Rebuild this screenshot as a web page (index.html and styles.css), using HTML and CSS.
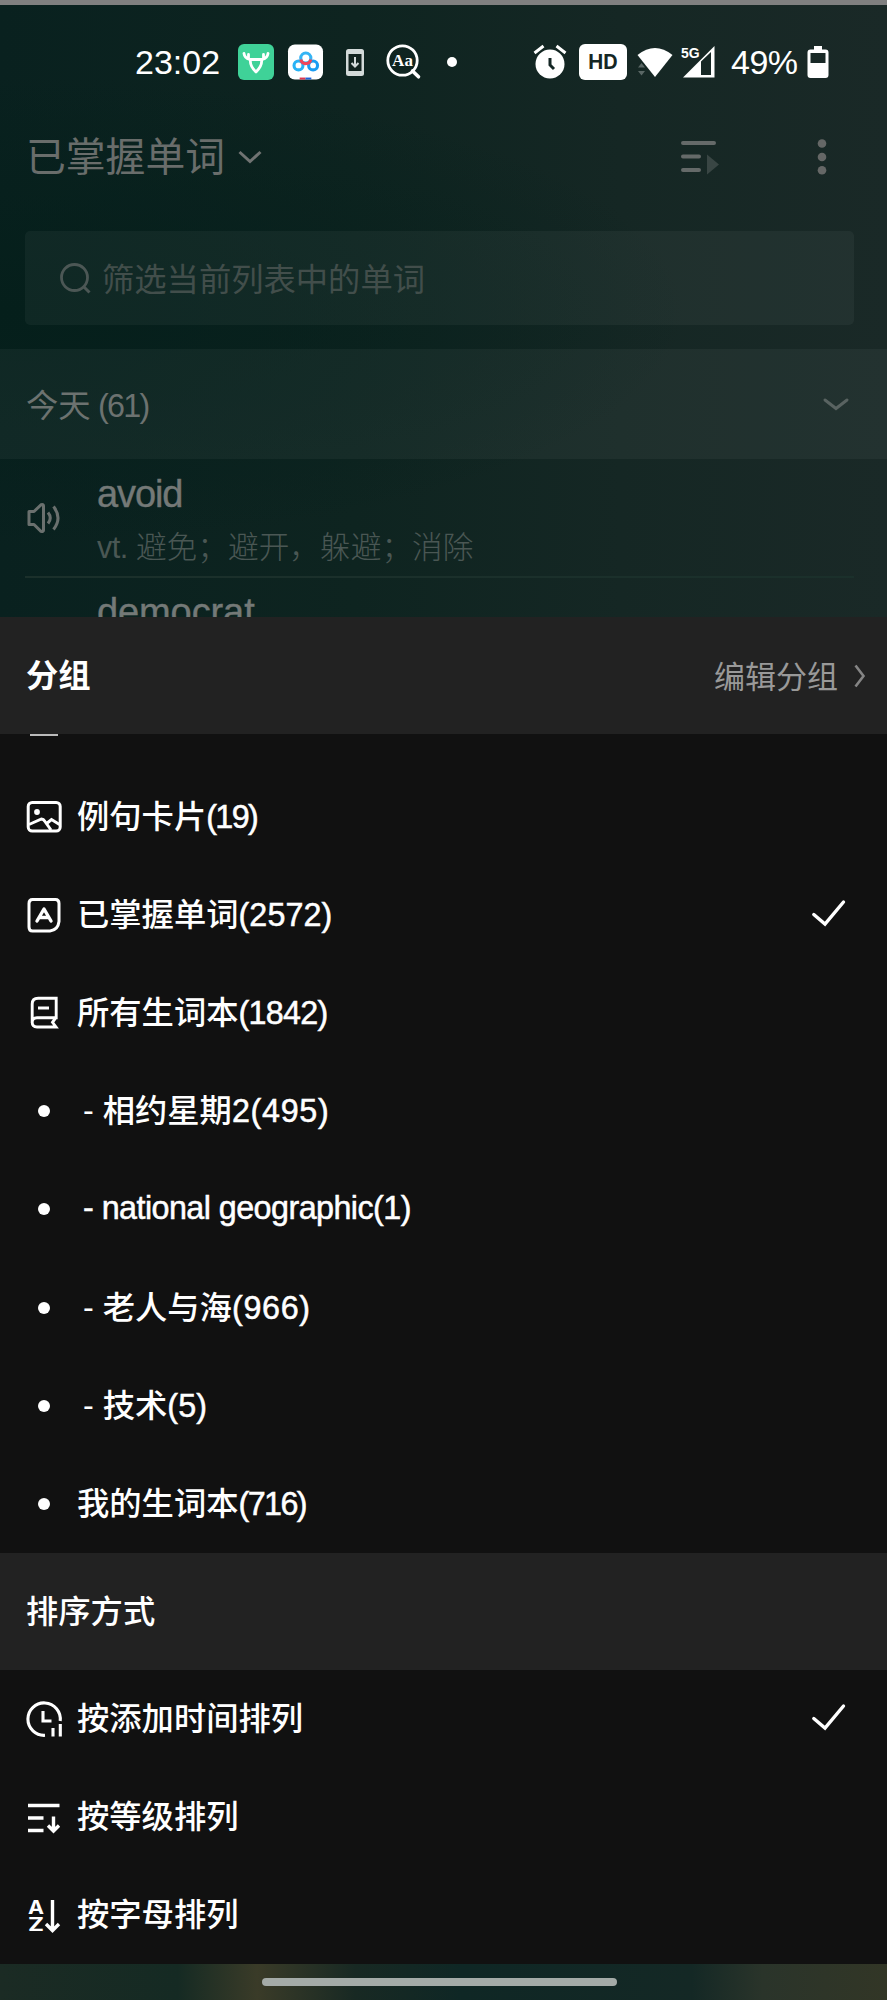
FILE: index.html
```html
<!DOCTYPE html>
<html lang="zh-CN">
<head>
    <meta charset="UTF-8">
    <meta name="viewport" content="width=device-width, initial-scale=1.0">
    <title>已掌握单词</title>
    <link rel="stylesheet" href="styles.css">
</head>
<body>
    <!-- Word list behind the sheet -->
    <div class="page">
        <!-- Status bar -->
        <div class="status-bar">
            <div class="status-left">
                <span class="time">23:02</span>
                <svg class="app-icon" width="36" height="36" viewBox="0 0 36 36">
                    <rect width="36" height="36" rx="6" fill="#3fd298"/>
                    <g fill="none" stroke="#fff" stroke-width="2.8" stroke-linecap="round" stroke-linejoin="round">
                        <path d="M6 9.500c.5 3.500 2 5 5.500 6h13c3.500-1 5-2.500 5.500-6M10.500 10.500v4.500M25.500 10.500v4.500"/>
                        <path d="M12.500 16c-.8 4.500 1.500 8 5.500 12 4-4 6.300-7.500 5.500-12"/>
                    </g>
                </svg>
                <svg class="cloud-icon" width="35" height="36" viewBox="0 0 36 36">
                    <rect width="36" height="36" rx="7" fill="#fff"/>
                    <g fill="none" stroke-width="3.200">
                        <circle cx="10.800" cy="21.500" r="4.600" stroke="#28b2f5"/>
                        <circle cx="25.800" cy="21.500" r="4.600" stroke="#1a9df2"/>
                        <circle cx="18.300" cy="14" r="5.200" stroke="#35b4f4"/>
                        <path d="M13.200 15.500a5.200 5.200 0 0 0 10.200 0" stroke="#f0455a"/>
                    </g>
                    <path d="M12 34h6v2h-6z" fill="#e0354f"/>
                    <path d="M18 34h6v2h-6z" fill="#1c62d8"/>
                </svg>
                <svg class="phone-icon" width="18" height="27" viewBox="0 0 18 27">
                    <rect width="18" height="27" rx="2.500" fill="#d3dad9"/>
                    <path d="M2.500 5h13v17h-13z" fill="#12231f"/>
                    <path d="M9 8v9M5.500 14 9 17.500l3.500-3.500" fill="none" stroke="#d3dad9" stroke-width="2"/>
                </svg>
                <svg class="dict-icon" width="36" height="36" viewBox="0 0 36 36">
                    <circle cx="16.500" cy="16.500" r="14.700" fill="none" stroke="#fff" stroke-width="2.800"/>
                    <path d="m26.500 27 6 5.800" stroke="#fff" stroke-width="3.600" stroke-linecap="round"/>
                    <text x="16.500" y="21.500" text-anchor="middle" font-family="Liberation Serif" font-weight="bold" font-size="17" fill="#fff">Aa</text>
                </svg>
                <span class="dot"></span>
            </div>
            <div class="status-right">
                <svg width="34" height="34" viewBox="0 0 34 34">
                    <circle cx="17" cy="19" r="14.500" fill="#fff"/>
                    <path d="m1.500 8 9-7M32.500 8l-9-7" stroke="#fff" stroke-width="3"/>
                    <path d="M17 13v7l4 4" fill="none" stroke="#142624" stroke-width="3"/>
                </svg>
                <span class="hd">HD</span>
                <svg class="wifi" width="36" height="31" viewBox="0 0 36 31">
                    <path d="M.5 8Q18-6 35.500 8L18 30z" fill="#fff"/>
                    <path d="m4.500 16 3.500 4.500H1zM4.500 28.500 8 24H1z" fill="#5a6765"/>
                </svg>
                <svg class="signal" width="34" height="33" viewBox="0 0 34 33">
                    <path d="M2 31.500 33.500 0v31.500zM20 15.500V29h10V6z" fill="#fff" fill-rule="evenodd"/>
                    <text x="0" y="12" font-family="Liberation Sans" font-weight="bold" font-size="14" fill="#fff">5G</text>
                </svg>
                <span class="percent">49%</span>
                <svg width="22" height="33" viewBox="0 0 22 33">
                    <path d="M7 0h8v3.500h3.500A3 3 0 0 1 21.500 6.500v22.500a3 3 0 0 1-3 3h-15a3 3 0 0 1-3-3V6.500a3 3 0 0 1 3-3H7zM3.500 7v10h15V7z" fill="#fff" fill-rule="evenodd"/>
                </svg>
            </div>
        </div>

        <!-- Title bar -->
        <div class="title-bar">
            <span class="title">已掌握单词</span>
            <svg class="title-arrow" width="24" height="14" viewBox="0 0 24 14">
                <path d="m1.500 2 10.500 9.500L22.500 2" fill="none" stroke="#707372" stroke-width="3"/>
            </svg>
            <svg class="play-list" width="38" height="36" viewBox="0 0 38 36">
                <path d="M2 4h31M2 17.500h16M2 31h16" stroke="#656a69" stroke-width="4" stroke-linecap="round"/>
                <path d="M26 15.500v20L38 25.500z" fill="#394644"/>
            </svg>
            <svg class="more" width="10" height="36" viewBox="0 0 10 36">
                <g fill="#656766"><circle cx="5" cy="4.500" r="4.300"/><circle cx="5" cy="18" r="4.300"/><circle cx="5" cy="31.300" r="4.300"/></g>
            </svg>
        </div>

        <!-- Search -->
        <div class="search">
            <svg width="31" height="31" viewBox="0 0 31 31">
                <circle cx="14.500" cy="14.500" r="13" fill="none" stroke="#4c5755" stroke-width="2.800"/>
                <path d="m23.500 23.500 6 6" stroke="#4c5755" stroke-width="3"/>
            </svg>
            <span>筛选当前列表中的单词</span>
        </div>

        <!-- Today group -->
        <div class="group-bar">
            <span class="group-name">今天<span class="group-count"> (61)</span></span>
            <svg width="26" height="13" viewBox="0 0 26 13">
                <path d="m2 2 11 8.500L24 2" fill="none" stroke="#596361" stroke-width="3" stroke-linecap="round"/>
            </svg>
        </div>

        <div class="word">
            <svg width="34" height="30" viewBox="0 0 34 30">
                <g fill="none" stroke="#6a706e" stroke-width="3" stroke-linejoin="round">
                    <path d="M2 8.500h5L14 1.800q2.500-.8 2.500 1v24.500q0 1.800-2.500 1L7 21.500H2z"/>
                    <path d="M21 9.500q4.500 5.500 0 11M26.500 3.500q9 11.500 0 23"/>
                </g>
            </svg>
            <div class="word-text">
                <div class="word-name short">avoid</div>
                <div class="word-mean"><span class="pos">vt. </span>避免；避开，躲避；消除</div>
            </div>
        </div>
        <div class="word next">
            <div class="word-name">democrat</div>
        </div>
    </div>

    <!-- Group sheet -->
    <div class="sheet">
        <div class="sheet-header">
            <span class="strong">分组</span>
            <span class="edit"><span class="edit-text">编辑分组</span>
                <svg width="12" height="24" viewBox="0 0 12 24">
                    <path d="m1.500 1.500 8 10.500-8 10.500" fill="none" stroke="#858585" stroke-width="2.600"/>
                </svg>
            </span>
        </div>
        <div class="cut-row"></div>
        <div class="row">
            <svg class="icon" width="36" height="36" viewBox="0 0 36 36">
                <rect x="2.200" y="3.500" width="32" height="28.500" rx="4" fill="none" stroke="#fff" stroke-width="3"/>
                <circle cx="11" cy="13" r="2.900" fill="#fff"/>
                <path d="m3 25.500 12.500-5.500q2 0 3.500 2.500l6 8.500M20 25l5.500-4.500 8 5" fill="none" stroke="#fff" stroke-width="3"/>
            </svg>
            <span class="label">例句卡片<span class="count one">(19)</span></span>
        </div>
        <div class="row">
            <svg class="icon" width="36" height="36" viewBox="0 0 36 36">
                <path d="M6.500 2.500h23q3.500 0 3.500 4v18q-1 8.500-9 9.500H6.500q-3.500 0-3.500-4V6.500q0-4 3.500-4z" fill="none" stroke="#fff" stroke-width="3"/>
                <path d="m11 24 7-12 7 12M14.500 20.500h7" fill="none" stroke="#fff" stroke-width="3.400" stroke-linecap="round" stroke-linejoin="round"/>
            </svg>
            <span class="label">已掌握单词<span class="count">(2572)</span></span>
            <svg class="check" width="33" height="26" viewBox="0 0 33 26">
                <path d="m1.800 14.500 11.200 9.500L31.500 2" fill="none" stroke="#fff" stroke-width="3.400" stroke-linecap="round"/>
            </svg>
        </div>
        <div class="row">
            <svg class="icon" width="36" height="36" viewBox="0 0 36 36">
                <g fill="none" stroke="#fff" stroke-width="2.900">
                    <path d="M6.200 28V9q0-5.700 6-5.700h18v19.500H11q-4.800 0-4.800 4.500 0 4.700 4.800 4.700h19l-3.500-4.700 3.200-4.500M12 13h11"/>
                </g>
            </svg>
            <span class="label">所有生词本<span class="count thousand">(1842)</span></span>
        </div>
        <div class="row">
            <i class="bullet"></i>
            <span class="label sub">- 相约星期<span class="count wide">2(495)</span></span>
        </div>
        <div class="row">
            <i class="bullet"></i>
            <span class="label sub latin">- national geographic(1)</span>
        </div>
        <div class="row">
            <i class="bullet"></i>
            <span class="label sub">- 老人与海<span class="count wide">(966)</span></span>
        </div>
        <div class="row">
            <i class="bullet"></i>
            <span class="label sub">- 技术<span class="count">(5)</span></span>
        </div>
        <div class="row">
            <i class="bullet"></i>
            <span class="label">我的生词本<span class="count one">(716)</span></span>
        </div>

        <!-- Sort options -->
        <div class="sheet-header">
            <span class="label">排序方式</span>
        </div>
        <div class="row">
            <svg class="icon" width="36" height="36" viewBox="0 0 36 36">
                <g fill="none" stroke="#fff" stroke-width="3.100">
                    <path d="M19 34.300A16.200 16.200 0 1 1 34.200 20"/>
                    <path d="M17 10v10h8.500M27 27v8.500M34.300 23v12.500"/>
                </g>
            </svg>
            <span class="label">按添加时间排列</span>
            <svg class="check" width="33" height="26" viewBox="0 0 33 26">
                <path d="m1.800 14.500 11.200 9.500L31.500 2" fill="none" stroke="#fff" stroke-width="3.400" stroke-linecap="round"/>
            </svg>
        </div>
        <div class="row">
            <svg class="icon" width="36" height="36" viewBox="0 0 36 36">
                <path d="M2 6.500h31.500M2 19h15.500M2 31.500h15.500M27.500 17.500V32M22 26.500l5.500 5.500 5.500-5.500" fill="none" stroke="#fff" stroke-width="3.400"/>
            </svg>
            <span class="label">按等级排列</span>
        </div>
        <div class="row">
            <svg class="icon" width="36" height="36" viewBox="0 0 36 36">
                <g font-family="Inter, Liberation Sans" font-weight="bold" font-size="19" fill="#fff">
                    <text x="2" y="16.500" textLength="16" lengthAdjust="spacingAndGlyphs">A</text>
                    <text x="2" y="34" textLength="16" lengthAdjust="spacingAndGlyphs">Z</text>
                </g>
                <path d="M26.500 3v30M20 27l6.500 6.500L33 27" fill="none" stroke="#fff" stroke-width="3.400"/>
            </svg>
            <span class="label">按字母排列</span>
        </div>
    </div>

    <!-- Home indicator -->
    <div class="nav-bar"><div class="pill"></div></div>
</body>
</html>
```
FILE: styles.css
```css
body {
    margin: 0;
    font-family: "Liberation Sans", "Noto Sans CJK SC", sans-serif;
    font-size: 32.3px;
    color: #fff;
    background-color: #111;
}

svg {
    display: block;
    flex: none;
    overflow: visible;
}

.page {
    height: 617px;
    box-sizing: border-box;
    overflow: hidden;
    border-top: 5px solid #808080;
    background: radial-gradient(ellipse at 0% 50%, #051f1b, rgba(5, 31, 27, 0) 55%),
                linear-gradient(90deg, #09211f 0%, #0e2420 40%, #152724 70%, #1a2927 100%);
}

.status-bar {
    display: flex;
    justify-content: space-between;
    height: 114px;
    padding: 0 58px 0 135px;
}

.status-left, .status-right {
    display: flex;
    align-items: center;
    font-size: 34px;
}

.time {
    width: 86px;
    margin-right: 17px;
}

.cloud-icon { margin-left: 14px; }
.phone-icon { margin-left: 23px; }
.dict-icon { margin-left: 22px; }

.dot {
    width: 10px;
    height: 10px;
    margin-left: 25px;
    border-radius: 50%;
    background-color: #fff;
}

.hd {
    width: 48px;
    height: 36px;
    margin: 0 10px 0 12px;
    border-radius: 6px;
    background-color: #fff;
    color: #142624;
    font: bold 20px/37px Inter, "Liberation Sans", sans-serif;
    text-align: center;
}

.signal { margin-left: 8px; }

.percent {
    width: 68px;
    margin: 0 8px 0 16px;
    letter-spacing: -0.5px;
}

.title-bar {
    display: flex;
    align-items: center;
    height: 76px;
    padding: 0 60px 0 26px;
}

.title {
    font-size: 39.8px;
    line-height: 76px;
    color: #696d6b;
}

.title-arrow { margin-left: 13px; }
.play-list { margin-left: auto; }
.more { margin-left: 98px; }

.search {
    display: flex;
    align-items: center;
    height: 94px;
    margin: 36px 33px 0 25px;
    padding-left: 35px;
    box-sizing: border-box;
    border-radius: 5px;
    background-color: rgba(255, 255, 255, 0.045);
    color: #424e4b;
}

.search span {
    margin-left: 11px;
    padding-bottom: 3px;
}

.group-bar {
    display: flex;
    align-items: center;
    justify-content: space-between;
    height: 110px;
    margin-top: 24px;
    padding: 0 38px 0 26px;
    background-color: rgba(255, 255, 255, 0.045);
    color: #6c7270;
}

.group-name {
    padding-bottom: 3px;
}

.group-count {
    letter-spacing: -1.7px;
}

.word {
    display: flex;
    align-items: center;
    height: 117px;
    margin: 0 33px 0 25px;
    border-bottom: 2px solid #1b302b;
    color: #747977;
}

.word > svg {
    margin: 1px 36px 0 2px;
}

.word-text {
    padding-top: 8px;
}

.word-name {
    font-size: 38px;
    line-height: 48px;
    letter-spacing: -0.1px;
    -webkit-text-stroke: 0.4px #747977;
}

.short {
    letter-spacing: -1.1px;
}

.word-mean {
    margin-top: 5px;
    font-size: 30.7px;
    line-height: 50px;
    font-weight: 300;
    color: #4a5754;
}

.pos {
    letter-spacing: -0.5px;
}

.next {
    padding-left: 72px;
    align-items: flex-start;
}

.next .word-name {
    margin-top: 10px;
}

/* Bottom sheet */
.sheet {
    height: 1347px;
    background-color: #111;
    font-weight: 500;
}

.sheet-header {
    display: flex;
    align-items: center;
    justify-content: space-between;
    height: 117px;
    padding: 0 21px 0 26px;
    background-color: #222;
}

.strong {
    padding-bottom: 6px;
    font-weight: bold;
}

.edit {
    display: flex;
    align-items: center;
    gap: 16px;
    font-size: 31px;
    font-weight: 400;
    color: #999;
}

.edit-text {
    padding-bottom: 3px;
}

/* bottom edge of the row scrolled under the header */
.cut-row {
    height: 33px;
}

.cut-row::before {
    content: "";
    display: block;
    width: 28px;
    height: 2px;
    margin-left: 30px;
    background-color: #bbb;
}

.row {
    display: flex;
    align-items: center;
    height: 98.2px;
    padding: 0 42px 0 26px;
}

.icon {
    margin: 1px 15px 0 0;
}

.label {
    padding-bottom: 5px;
}

.count {
    letter-spacing: 0.1px;
    -webkit-text-stroke: 0.5px #fff;
}

.one {
    letter-spacing: -1.6px;
}

.thousand {
    letter-spacing: -0.7px;
}

.wide {
    letter-spacing: 0.7px;
}

.bullet {
    width: 12px;
    height: 12px;
    margin: 1px 27px 0 12px;
    border-radius: 50%;
    background-color: #fff;
}

.sub {
    margin-left: 6px;
}

.latin {
    padding-bottom: 0;
    letter-spacing: -0.55px;
    -webkit-text-stroke: 0.5px #fff;
}

.check {
    margin: -3px 0 0 auto;
}

.nav-bar {
    display: flex;
    justify-content: center;
    align-items: center;
    height: 36px;
    background: linear-gradient(90deg, #1b2b24 0%, #152a23 20%, #3a3b28 29%, #182923 40%, #0f2725 52%, #142825 78%, #2a342a 86%, #323626 100%);
}

.pill {
    width: 355px;
    height: 8px;
    margin-right: 8px;
    border-radius: 4px;
    background-color: #a4aba8;
}
```
